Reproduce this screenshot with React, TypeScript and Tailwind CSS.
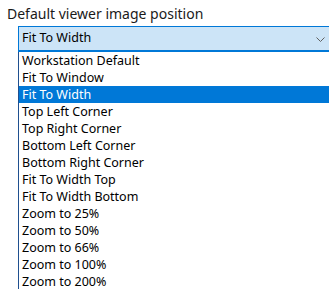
import React from 'react';

const options = [
  'Workstation Default',
  'Fit To Window',
  'Fit To Width',
  'Top Left Corner',
  'Top Right Corner',
  'Bottom Left Corner',
  'Bottom Right Corner',
  'Fit To Width Top',
  'Fit To Width Bottom',
  'Zoom to 25%',
  'Zoom to 50%',
  'Zoom to 66%',
  'Zoom to 100%',
  'Zoom to 200%',
];

export default function App() {
  const selected = 'Fit To Width';

  return (
    <div
      className="w-[329px] h-[289px] overflow-hidden bg-white text-[12.5px] text-black"
      style={{ fontFamily: '"Noto Sans", "Open Sans", sans-serif' }}
    >
      <div className="h-[26px] flex items-center pl-[7px] text-[14px] text-[#1a1a1a]">
        Default viewer image position
      </div>

      {/* Select box */}
      <div className="ml-[18px] w-[316px] h-[26px] flex items-center justify-between border border-b-2 border-[#0078d7] bg-[#cce4f7] pl-[3px] pr-[8px]">
        <span>{selected}</span>
        <svg width="9" height="5" viewBox="0 0 9 5" className="mt-[1px]">
          <path d="M0.5 0.5 L4.5 4.5 L8.5 0.5" fill="none" stroke="#606060" strokeWidth="1" />
        </svg>
      </div>

      {/* Open list */}
      <div className="ml-[18px] w-[316px] border-l border-[#1f4f8f]">
        {options.map((opt) => (
          <div
            key={opt}
            className={
              'h-[17px] leading-[17px] pl-[3px] whitespace-nowrap ' +
              (opt === selected ? 'bg-[#0078d7] text-white' : 'text-black')
            }
          >
            {opt}
          </div>
        ))}
      </div>
    </div>
  );
}
